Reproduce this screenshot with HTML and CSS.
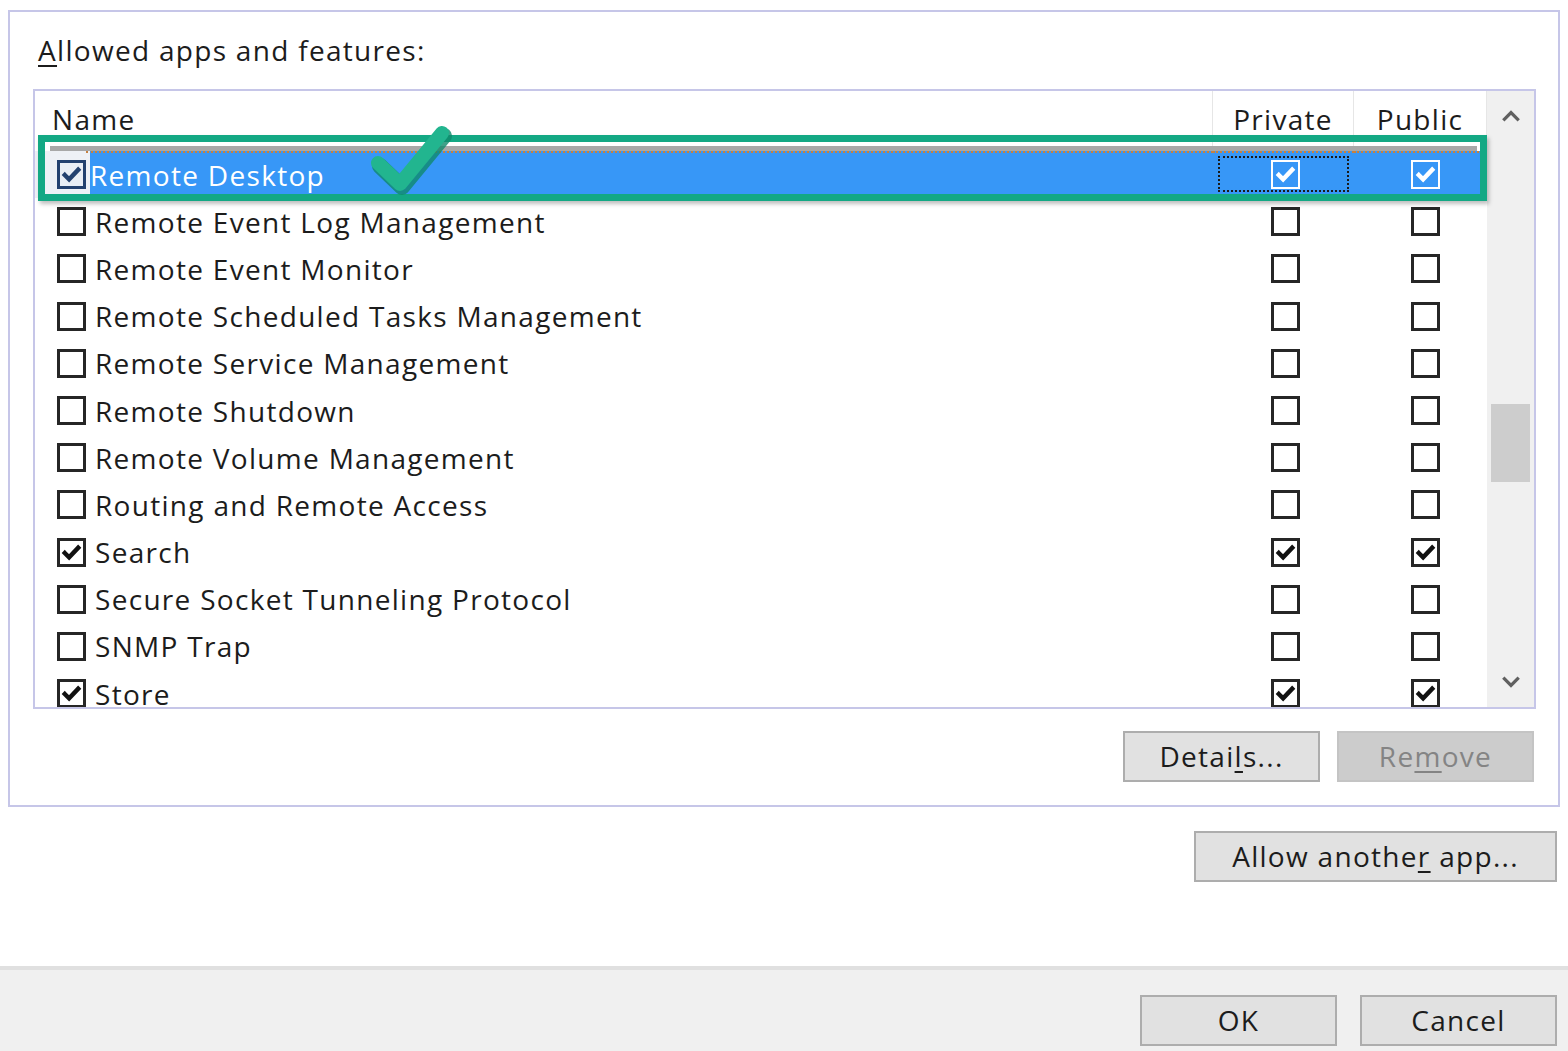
FILE: index.html
```html
<!DOCTYPE html>
<html>
<head>
<meta charset="utf-8">
<link rel="stylesheet" href="styles.css">
</head>
<body>
<div class="page">
  <div class="frame">
    <div class="label"><u>A</u>llowed apps and features:</div>
    <div class="list">
      <div class="listmain">
        <div class="header">
          <div class="hname">Name</div>
          <div class="hcol">Private</div>
          <div class="hcol">Public</div>
        </div>
        <div class="rows">
          <div class="row selected">
            <div class="cname"><span class="cb cb-nav"><svg viewBox="0 0 24 24"><path d="M5 12.5l4.5 4.5 9.5-10"/></svg></span><span class="txt">Remote Desktop</span></div>
            <div class="ccol focus"><span class="cb cb-white"><svg viewBox="0 0 24 24"><path d="M5 12.5l4.5 4.5 9.5-10"/></svg></span></div>
            <div class="ccol"><span class="cb cb-white"><svg viewBox="0 0 24 24"><path d="M5 12.5l4.5 4.5 9.5-10"/></svg></span></div>
          </div>
          <div class="row"><div class="cname"><span class="cb"></span><span class="txt">Remote Event Log Management</span></div><div class="ccol"><span class="cb"></span></div><div class="ccol"><span class="cb"></span></div></div>
          <div class="row"><div class="cname"><span class="cb"></span><span class="txt">Remote Event Monitor</span></div><div class="ccol"><span class="cb"></span></div><div class="ccol"><span class="cb"></span></div></div>
          <div class="row"><div class="cname"><span class="cb"></span><span class="txt">Remote Scheduled Tasks Management</span></div><div class="ccol"><span class="cb"></span></div><div class="ccol"><span class="cb"></span></div></div>
          <div class="row"><div class="cname"><span class="cb"></span><span class="txt">Remote Service Management</span></div><div class="ccol"><span class="cb"></span></div><div class="ccol"><span class="cb"></span></div></div>
          <div class="row"><div class="cname"><span class="cb"></span><span class="txt">Remote Shutdown</span></div><div class="ccol"><span class="cb"></span></div><div class="ccol"><span class="cb"></span></div></div>
          <div class="row"><div class="cname"><span class="cb"></span><span class="txt">Remote Volume Management</span></div><div class="ccol"><span class="cb"></span></div><div class="ccol"><span class="cb"></span></div></div>
          <div class="row"><div class="cname"><span class="cb"></span><span class="txt">Routing and Remote Access</span></div><div class="ccol"><span class="cb"></span></div><div class="ccol"><span class="cb"></span></div></div>
          <div class="row"><div class="cname"><span class="cb"><svg viewBox="0 0 24 24"><path d="M5 12.5l4.5 4.5 9.5-10"/></svg></span><span class="txt">Search</span></div><div class="ccol"><span class="cb"><svg viewBox="0 0 24 24"><path d="M5 12.5l4.5 4.5 9.5-10"/></svg></span></div><div class="ccol"><span class="cb"><svg viewBox="0 0 24 24"><path d="M5 12.5l4.5 4.5 9.5-10"/></svg></span></div></div>
          <div class="row"><div class="cname"><span class="cb"></span><span class="txt">Secure Socket Tunneling Protocol</span></div><div class="ccol"><span class="cb"></span></div><div class="ccol"><span class="cb"></span></div></div>
          <div class="row"><div class="cname"><span class="cb"></span><span class="txt">SNMP Trap</span></div><div class="ccol"><span class="cb"></span></div><div class="ccol"><span class="cb"></span></div></div>
          <div class="row"><div class="cname"><span class="cb"><svg viewBox="0 0 24 24"><path d="M5 12.5l4.5 4.5 9.5-10"/></svg></span><span class="txt">Store</span></div><div class="ccol"><span class="cb"><svg viewBox="0 0 24 24"><path d="M5 12.5l4.5 4.5 9.5-10"/></svg></span></div><div class="ccol"><span class="cb"><svg viewBox="0 0 24 24"><path d="M5 12.5l4.5 4.5 9.5-10"/></svg></span></div></div>
        </div>
      </div>
      <div class="scrollbar">
        <svg class="chev" viewBox="0 0 20 12"><path d="M3 10l7-7 7 7"/></svg>
        <div class="track"><div class="thumb"></div></div>
        <svg class="chev" viewBox="0 0 20 12"><path d="M3 2l7 7 7-7"/></svg>
      </div>
    </div>
    <div class="btnrow">
      <div class="btn"><span>Detai<u>l</u>s...</span></div>
      <div class="btn disabled"><span>Re<u>m</u>ove</span></div>
    </div>
  </div>
  <div class="allowrow">
    <div class="btn wide"><span>Allow anothe<u>r</u> app...</span></div>
  </div>
  <div class="footer">
    <div class="btn"><span>OK</span></div>
    <div class="btn"><span>Cancel</span></div>
  </div>
  <div class="highlight-box"></div>
  <svg class="tick" viewBox="0 0 100 80"><path class="tick-shadow" d="M18 48l22 21 42-51"/><path class="tick-main" d="M16 45l22 21 42-51"/></svg>
</div>
</body>
</html>
```

FILE: styles.css
```css
* { box-sizing: border-box; }
html, body { margin: 0; padding: 0; background: #ffffff; }
body {
  font-family: "Open Sans", "Noto Sans", "Liberation Sans", sans-serif;
  font-size: 28px;
  letter-spacing: 1.3px;
  color: #1c1c1c;
}
.page {
  position: relative;
  width: 1568px;
  height: 1051px;
  overflow: hidden;
  display: flex;
  flex-direction: column;
}
u { text-decoration: underline; text-decoration-thickness: 2px; text-underline-offset: 4px; }

.frame {
  margin: 10px 0 0 8px;
  width: 1552px;
  height: 797px;
  border: 2px solid #c6c6e8;
  display: flex;
  flex-direction: column;
  flex: none;
}
.label {
  height: 77px;
  flex: none;
  padding: 19px 0 0 28px;
  line-height: 38px;
}
.list {
  margin-left: 23px;
  width: 1503px;
  height: 620px;
  flex: none;
  border: 2px solid #c6c6e8;
  display: flex;
  overflow: hidden;
}
.listmain { flex: 1; display: flex; flex-direction: column; overflow: hidden; }
.header {
  height: 60px;
  flex: none;
  display: grid;
  grid-template-columns: 1178px 141px 133px;
  position: relative;
}
.header::after {
  content: "";
  position: absolute;
  left: 15px; right: 10px; bottom: 0;
  height: 5px;
  background: #a8a8a8;
}
.hname { padding: 8px 0 0 17px; line-height: 40px; border-right: 1px solid #e6e6e6; }
.hcol { text-align: center; padding-top: 8px; line-height: 40px; border-right: 1px solid #e6e6e6; }
.rows { flex: none; }
.row {
  height: 47.2px;
  display: grid;
  grid-template-columns: 1178px 141px 133px;
  align-items: center;
}
.cname { display: flex; align-items: center; height: 100%; padding-left: 22px; }
.txt { margin-left: 9px; line-height: 40px; white-space: nowrap; }
.ccol { display: flex; justify-content: center; align-items: center; height: 100%; }
.row .ccol:nth-child(2) { padding-left: 4px; }
.row .ccol:nth-child(3) { padding-left: 10px; }

.cb {
  width: 29px; height: 29px;
  border: 3px solid #262626;
  background: #fff;
  display: inline-flex;
  align-items: center;
  justify-content: center;
  flex: none;
}
.cb svg { width: 23px; height: 23px; }
.cb svg path { fill: none; stroke: #111; stroke-width: 4.6; stroke-linecap: square; stroke-linejoin: miter; }

.row.selected .cname { padding-left: 17px; }
.row.selected .cname .cb { margin-left: 5px; }
.row.selected { background: linear-gradient(to right, #eef1f6 0, #eef1f6 55px, #3797f7 55px); }
.row.selected .txt {
  color: #ffffff;
  margin-left: 0;
  padding-left: 4px;
  flex: 1;
  height: 100%;
  display: flex; align-items: center;
  border-top: 2px dotted #c7813f;
  border-bottom: 2px dotted #c7813f;
}
.cb-nav { border-color: #23416f; background: #e9eef5; }
.cb-nav svg path { stroke: #23416f; }
.cb-white { border-color: #ffffff; background: transparent; border-width: 2px; }
.cb-white svg path { stroke: #ffffff; }
.row.selected .ccol { border-top: 2px dotted #c7813f; border-bottom: 2px dotted #c7813f; }
.focus { position: relative; }
.focus::after {
  content: "";
  position: absolute;
  left: 5px; right: 5px; top: 3px; bottom: 4px;
  border: 2px dotted #1a1a1a;
}

.scrollbar {
  width: 47px;
  flex: none;
  background: #f0f0f0;
  display: flex;
  flex-direction: column;
  align-items: center;
}
.chev { width: 22px; height: 14px; margin: 18px 0; flex: none; }
.chev path { fill: none; stroke: #606060; stroke-width: 3; }
.track { flex: 1; width: 100%; padding: 263px 4px 0 4px; }
.thumb { height: 78px; background: #cdcdcd; }

.btnrow {
  display: flex;
  justify-content: flex-end;
  gap: 17px;
  margin-top: 22px;
  padding-right: 24px;
}
.btn {
  width: 197px;
  height: 51px;
  flex: none;
  border: 2px solid #adadad;
  background: #e1e1e1;
  display: flex;
  align-items: center;
  justify-content: center;
  line-height: 1;
  padding-bottom: 2px;
  white-space: nowrap;
}
.btn.disabled { background: #cccccc; border-color: #c4c4c4; color: #848484; }
.allowrow { display: flex; justify-content: flex-end; padding-right: 11px; margin-top: 24px; }
.btn.wide { width: 363px; }
.footer {
  margin-top: 84px;
  flex: 1;
  background: #f0f0f0;
  border-top: 4px solid #e0e0e0;
  display: flex;
  justify-content: flex-end;
  gap: 23px;
  padding: 25px 11px 0 0;
}

.highlight-box {
  position: absolute;
  left: 38px; top: 135px;
  width: 1449px; height: 66px;
  border: 7px solid #13a884;
  box-shadow: 2px 3px 4px rgba(0,0,0,0.25);
}
.tick {
  position: absolute;
  left: 362px; top: 118px;
  width: 100px; height: 80px;
}
.tick path { fill: none; stroke-linecap: round; stroke-linejoin: round; }
.tick-shadow { stroke: #0f8a6b; stroke-width: 16; opacity: 0.8; }
.tick-main { stroke: #22b58f; stroke-width: 14; }
```
